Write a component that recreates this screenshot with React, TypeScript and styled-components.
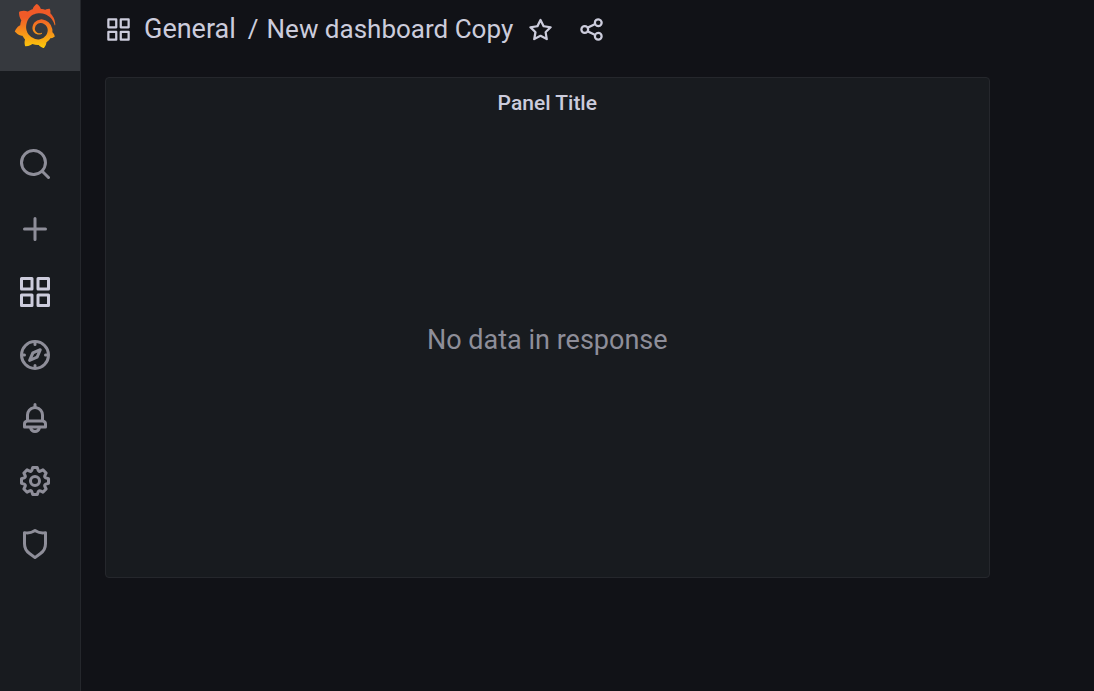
import React from "react";
import styled, { createGlobalStyle } from "styled-components";
import { SiGrafana } from "react-icons/si";

const GlobalStyle = createGlobalStyle`
  *, *::before, *::after { box-sizing: border-box; }
  body {
    margin: 0;
    background: #111217;
    color: #ccccdc;
    font-family: Roboto, "Liberation Sans", sans-serif;
  }
`;

const paths = {
  search:
    "M21.71,20.29,18,16.61A9,9,0,1,0,16.61,18l3.68,3.68a1,1,0,0,0,1.42,0A1,1,0,0,0,21.71,20.29ZM11,18a7,7,0,1,1,7-7A7,7,0,0,1,11,18Z",
  plus: "M19,11H13V5a1,1,0,0,0-2,0v6H5a1,1,0,0,0,0,2h6v6a1,1,0,0,0,2,0V13h6a1,1,0,0,0,0-2Z",
  apps: "M10,13H3a1,1,0,0,0-1,1v7a1,1,0,0,0,1,1h7a1,1,0,0,0,1-1V14A1,1,0,0,0,10,13ZM9,20H4V15H9ZM21,2H14a1,1,0,0,0-1,1v7a1,1,0,0,0,1,1h7a1,1,0,0,0,1-1V3A1,1,0,0,0,21,2ZM20,9H15V4h5Zm1,4H14a1,1,0,0,0-1,1v7a1,1,0,0,0,1,1h7a1,1,0,0,0,1-1V14A1,1,0,0,0,21,13Zm-1,7H15V15h5ZM10,2H3A1,1,0,0,0,2,3v7a1,1,0,0,0,1,1h7a1,1,0,0,0,1-1V3A1,1,0,0,0,10,2ZM9,9H4V4H9Z",
  compass:
    "M12,2A10,10,0,1,0,22,12,10,10,0,0,0,12,2Zm1,17.93V19a1,1,0,0,0-2,0v.93A8,8,0,0,1,4.07,13H5a1,1,0,0,0,0-2H4.07A8,8,0,0,1,11,4.07V5a1,1,0,0,0,2,0V4.07A8,8,0,0,1,19.93,11H19a1,1,0,0,0,0,2h.93A8,8,0,0,1,13,19.93ZM15.14,7.55l-5,2.12a1,1,0,0,0-.52.52l-2.12,5a1,1,0,0,0,.21,1.1,1,1,0,0,0,.7.3.93.93,0,0,0,.4-.09l5-2.12a1,1,0,0,0,.52-.52l2.12-5a1,1,0,0,0-1.31-1.31Zm-2.49,5.1-2.28,1,1-2.28,2.28-1Z",
  bell: "M18,13.18V10a6,6,0,0,0-5-5.91V3a1,1,0,0,0-2,0V4.09A6,6,0,0,0,6,10v3.18A3,3,0,0,0,4,16v2a1,1,0,0,0,1,1H8.14a4,4,0,0,0,7.72,0H19a1,1,0,0,0,1-1V16A3,3,0,0,0,18,13.18ZM8,10a4,4,0,0,1,8,0v3H8Zm4,10a2,2,0,0,1-1.72-1h3.44A2,2,0,0,1,12,20Zm6-3H6V16a1,1,0,0,1,1-1H17a1,1,0,0,1,1,1Z",
  cog: "M21.32,9.55l-1.89-.63.89-1.78A1,1,0,0,0,20.13,6L18,3.87a1,1,0,0,0-1.15-.19l-1.78.89-.63-1.89A1,1,0,0,0,13.5,2h-3a1,1,0,0,0-.95.68L8.92,4.57,7.14,3.68A1,1,0,0,0,6,3.87L3.87,6a1,1,0,0,0-.19,1.15l.89,1.78-1.89.63A1,1,0,0,0,2,10.5v3a1,1,0,0,0,.68.95l1.89.63-.89,1.78A1,1,0,0,0,3.87,18L6,20.13a1,1,0,0,0,1.15.19l1.78-.89.63,1.89a1,1,0,0,0,.95.68h3a1,1,0,0,0,.95-.68l.63-1.89,1.78.89A1,1,0,0,0,18,20.13L20.13,18a1,1,0,0,0,.19-1.15l-.89-1.78,1.89-.63A1,1,0,0,0,22,13.5v-3A1,1,0,0,0,21.32,9.55ZM20,12.78l-1.2.4A2,2,0,0,0,17.64,16l.57,1.14-1.1,1.1L16,17.64a2,2,0,0,0-2.79,1.16l-.4,1.2H11.22l-.4-1.2A2,2,0,0,0,8,17.64l-1.14.57-1.1-1.1L6.36,16A2,2,0,0,0,5.2,13.18L4,12.78V11.22l1.2-.4A2,2,0,0,0,6.36,8L5.79,6.89l1.1-1.1L8,6.36A2,2,0,0,0,10.82,5.2l.4-1.2h1.56l.4,1.2A2,2,0,0,0,16,6.36l1.14-.57,1.1,1.1L17.64,8a2,2,0,0,0,1.16,2.79l1.2.4ZM12,8a4,4,0,1,0,4,4A4,4,0,0,0,12,8Zm0,6a2,2,0,1,1,2-2A2,2,0,0,1,12,14Z",
  shield:
    "M19.63,3.65a1,1,0,0,0-.84-.2,8,8,0,0,1-6.22-1.27,1,1,0,0,0-1.14,0A8,8,0,0,1,5.21,3.45a1,1,0,0,0-.84.2A1,1,0,0,0,4,4.43v7.45a9,9,0,0,0,3.77,7.33l3.65,2.6a1,1,0,0,0,1.16,0l3.65-2.6A9,9,0,0,0,20,11.88V4.43A1,1,0,0,0,19.63,3.65ZM18,11.88a7,7,0,0,1-2.93,5.7L12,19.77,8.93,17.58A7,7,0,0,1,6,11.88V5.58a10,10,0,0,0,6-1.39,10,10,0,0,0,6,1.39Z",
  star: "M22,9.67A1,1,0,0,0,21.14,9l-5.69-.83L12.9,3a1,1,0,0,0-1.8,0L8.55,8.16,2.86,9a1,1,0,0,0-.81.68,1,1,0,0,0,.25,1l4.13,4-1,5.68A1,1,0,0,0,6.9,21.44L12,18.77l5.1,2.67a.93.93,0,0,0,.46.12,1,1,0,0,0,.59-.19,1,1,0,0,0,.4-1l-1-5.68,4.13-4A1,1,0,0,0,22,9.67Zm-6.15,4a1,1,0,0,0-.29.88l.72,4.2-3.76-2a1.06,1.06,0,0,0-.94,0l-3.76,2,.72-4.2a1,1,0,0,0-.29-.88l-3-3,4.21-.61a1,1,0,0,0,.76-.55L12,5.7l1.88,3.82a1,1,0,0,0,.76.55l4.21.61Z",
  share:
    "M18,14a4,4,0,0,0-3.08,1.48l-5.1-2.35a3.64,3.64,0,0,0,0-2.26l5.1-2.35A4,4,0,1,0,14,6a4.17,4.17,0,0,0,.07.71L8.79,9.14a4,4,0,1,0,0,5.72l5.28,2.43A4.17,4.17,0,0,0,14,18a4,4,0,1,0,4-4ZM18,4a2,2,0,1,1-2,2A2,2,0,0,1,18,4ZM6,14a2,2,0,1,1,2-2A2,2,0,0,1,6,14Zm12,6a2,2,0,1,1,2-2A2,2,0,0,1,18,20Z",
};

type IconName = keyof typeof paths;

const Svg = styled.svg`
  display: block;
  flex: none;
  fill: currentColor;
`;

function Icon({ name, size }: { name: IconName; size: number }) {
  return (
    <Svg viewBox="0 0 24 24" width={size} height={size} aria-hidden="true">
      <path d={paths[name]} />
    </Svg>
  );
}

const Page = styled.div`
  display: flex;
  min-height: 100vh;
`;

const Sidebar = styled.nav`
  flex: none;
  width: 81px;
  background: #181b1f;
  border-right: 1px solid #25272c;
`;

const HomeLink = styled.a`
  display: flex;
  justify-content: center;
  height: 71px;
  padding: 4px 10px 0 0;
  background: #36393e;

  path {
    fill: url(#brand-gradient);
  }
`;

const GradientDefs = styled.svg`
  display: block;
  width: 0;
  height: 0;
`;

const NavList = styled.ul`
  list-style: none;
  margin: 0;
  padding: 61px 0 0;
`;

const NavItem = styled.li<{ $spaced?: boolean }>`
  margin-bottom: ${(p) => (p.$spaced ? 2 : 0)}px;
`;

const NavLink = styled.a<{ $active?: boolean }>`
  display: flex;
  align-items: center;
  justify-content: center;
  height: 63px;
  padding-right: 10px;
  color: ${(p) => (p.$active ? "#ccccdc" : "#8e8e99")};

  &:hover {
    color: #ccccdc;
  }
`;

const Main = styled.main`
  flex: 1;
  min-width: 0;
  padding: 0 24px 24px;
`;

const Toolbar = styled.header`
  display: flex;
  align-items: center;
  height: 77px;
  padding-bottom: 19px;
`;

const Crumbs = styled.h1`
  display: flex;
  align-items: center;
  gap: 12px;
  margin: 0 14px 0 0;
  font-size: 27px;
  line-height: 36px;
  font-weight: 400;
  white-space: nowrap;
`;

const CrumbLink = styled.a`
  color: inherit;
  text-decoration: none;
`;

const Current = styled.span`
  display: flex;
  gap: 8px;
  font-size: 26px;
`;

const IconButton = styled.button`
  display: flex;
  margin: 0 24px 0 0;
  padding: 0;
  border: 0;
  background: none;
  color: inherit;
  cursor: pointer;
`;

const Grid = styled.div`
  display: grid;
  grid-template-columns: repeat(12, 1fr);
`;

const Panel = styled.section`
  grid-column: span 11;
  display: flex;
  flex-direction: column;
  min-height: 501px;
  background: #181b1f;
  border: 1px solid #25272c;
  border-radius: 4px;
`;

const PanelTitle = styled.h2`
  margin: 0;
  padding: 9px 12px;
  font-size: 21px;
  line-height: 32px;
  font-weight: 500;
  text-align: center;
`;

const PanelBody = styled.div`
  flex: 1;
  display: flex;
  align-items: center;
  justify-content: center;
  padding-bottom: 26px;
  color: #8e8e99;
  font-size: 27px;
  line-height: 36px;
`;

const navItems: { name: IconName; label: string; active?: boolean; spaced?: boolean }[] = [
  { name: "search", label: "Search", spaced: true },
  { name: "plus", label: "Create" },
  { name: "apps", label: "Dashboards", active: true },
  { name: "compass", label: "Explore" },
  { name: "bell", label: "Alerting" },
  { name: "cog", label: "Configuration" },
  { name: "shield", label: "Server admin" },
];

export default function App() {
  return (
    <>
      <GlobalStyle />
      <Page>
        <Sidebar aria-label="Main">
          <GradientDefs aria-hidden="true">
            <defs>
              <linearGradient id="brand-gradient" x1="0" y1="1" x2="0" y2="0">
                <stop offset="0" stopColor="#fcca0a" />
                <stop offset="0.7" stopColor="#f05a28" />
                <stop offset="1" stopColor="#f05a28" />
              </linearGradient>
            </defs>
          </GradientDefs>
          <HomeLink href="#home" aria-label="Home">
            <SiGrafana size={44} />
          </HomeLink>
          <NavList>
            {navItems.map((item) => (
              <NavItem key={item.name} $spaced={item.spaced}>
                <NavLink href={`#${item.name}`} aria-label={item.label} $active={item.active}>
                  <Icon name={item.name} size={36} />
                </NavLink>
              </NavItem>
            ))}
          </NavList>
        </Sidebar>
        <Main>
          <Toolbar>
            <Crumbs>
              <Icon name="apps" size={27} />
              <CrumbLink href="#general">General</CrumbLink>
              <Current>
                <span>/</span>
                <CrumbLink href="#dashboard">New dashboard Copy</CrumbLink>
              </Current>
            </Crumbs>
            <IconButton type="button" aria-label="Mark as favorite">
              <Icon name="star" size={27} />
            </IconButton>
            <IconButton type="button" aria-label="Share dashboard">
              <Icon name="share" size={27} />
            </IconButton>
          </Toolbar>
          <Grid>
            <Panel>
              <PanelTitle>Panel Title</PanelTitle>
              <PanelBody>No data in response</PanelBody>
            </Panel>
          </Grid>
        </Main>
      </Page>
    </>
  );
}
